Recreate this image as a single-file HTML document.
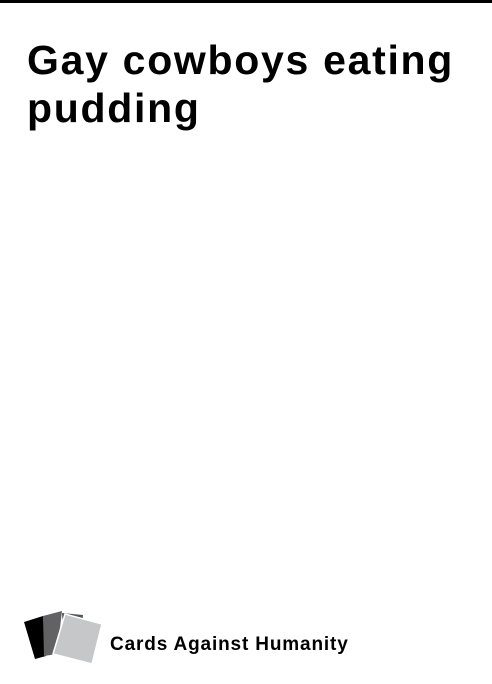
<!DOCTYPE html>
<html><head><style>
body{margin:0;width:492px;height:684px;background:#fff;overflow:hidden;position:relative;font-family:"Liberation Sans",sans-serif}
.bar{position:absolute;left:0;top:0;width:492px;height:3px;background:#000}
h1{position:absolute;left:27px;top:36px;margin:0;font-size:41px;line-height:48px;font-weight:bold;color:#000;width:465px;letter-spacing:1.7px}
.brand{position:absolute;left:110px;top:634px;font-size:19px;font-weight:bold;color:#000;line-height:22px;letter-spacing:0.85px}
svg{position:absolute;left:0;top:0}
</style></head><body>
<div class="bar"></div>
<h1>Gay cowboys eating<br>pudding</h1>
<svg width="120" height="684" viewBox="0 0 120 684">
<polygon points="24,622 43,616 46,656 35,659" fill="#000"/>
<polygon points="62,613 83,615 81,640 64,640" fill="#555"/>
<polygon points="43,616 62,611 57,654 44,656" fill="#626264"/>
<polygon points="65,614 102,624 92,664 53,654" fill="#c6c7c9" stroke="#fff" stroke-width="1.5"/>
</svg>
<div class="brand">Cards Against Humanity</div>
</body></html>
